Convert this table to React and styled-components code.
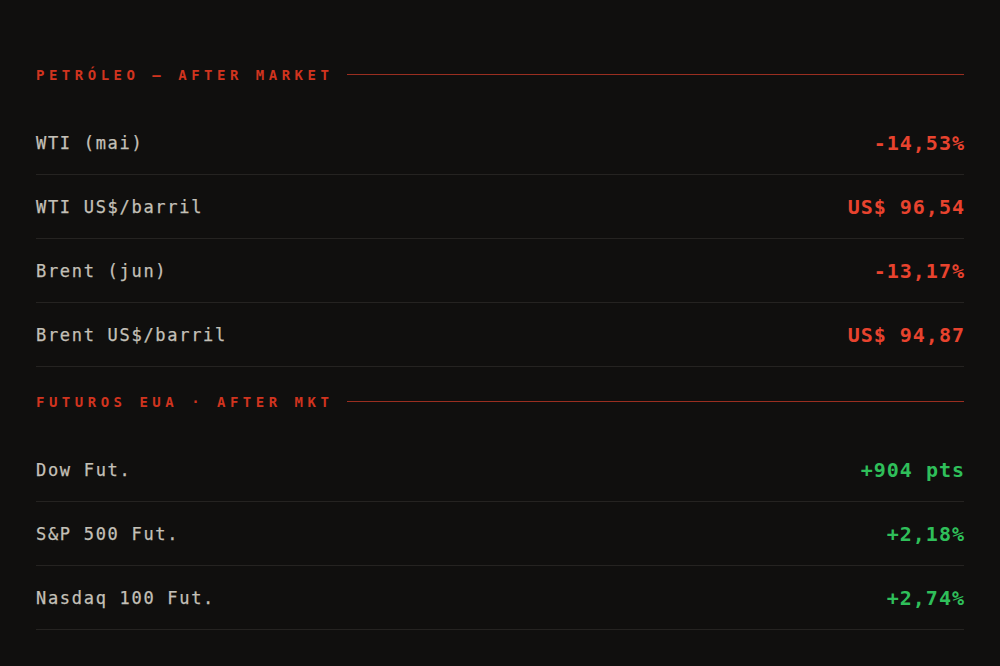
import React from 'react'
import styled, { createGlobalStyle } from 'styled-components'

const GlobalStyle = createGlobalStyle`
  html, body {
    margin: 0;
    padding: 0;
    background: #100f0e;
  }
  body {
    font-family: "DejaVu Sans Mono", "Liberation Mono", monospace;
  }
`

const Page = styled.div`
  min-height: 666px;
  box-sizing: border-box;
  padding: 66px 36px 0;
  background: #100f0e;
`

const Section = styled.section`
  & + & {
    margin-top: 26px;
  }
`

const SectionHeader = styled.div`
  display: flex;
  align-items: center;
  gap: 14px;
  height: 17px;
  margin-bottom: 28px;
`

const SectionTitle = styled.span`
  font-size: 14px;
  font-weight: 700;
  letter-spacing: 4.5px;
  color: #d1341f;
  white-space: nowrap;
`

const SectionRule = styled.span`
  flex: 1;
  border-top: 1px solid #9a2e20;
`

const Row = styled.div`
  display: flex;
  align-items: center;
  justify-content: space-between;
  height: 64px;
  box-sizing: border-box;
  border-bottom: 1px solid #252321;
`

const Label = styled.span`
  font-size: 17px;
  letter-spacing: 1.7px;
  color: #c4c0b8;
  -webkit-text-stroke: 0.25px #c4c0b8;
`

const Value = styled.span`
  font-size: 20px;
  font-weight: 700;
  letter-spacing: 1px;
  margin-right: -1px;
  color: ${p => (p.$up ? '#2fbf5a' : '#e8432e')};
`

const sections = [
  {
    title: 'PETRÓLEO — AFTER MARKET',
    rows: [
      ['WTI (mai)', '-14,53%'],
      ['WTI US$/barril', 'US$ 96,54'],
      ['Brent (jun)', '-13,17%'],
      ['Brent US$/barril', 'US$ 94,87'],
    ],
  },
  {
    title: 'FUTUROS EUA · AFTER MKT',
    up: true,
    rows: [
      ['Dow Fut.', '+904 pts'],
      ['S&P 500 Fut.', '+2,18%'],
      ['Nasdaq 100 Fut.', '+2,74%'],
    ],
  },
]

export default function App() {
  return (
    <>
      <GlobalStyle />
      <Page>
        {sections.map(s => (
          <Section key={s.title}>
            <SectionHeader>
              <SectionTitle>{s.title}</SectionTitle>
              <SectionRule />
            </SectionHeader>
            {s.rows.map(([label, value]) => (
              <Row key={label}>
                <Label>{label}</Label>
                <Value $up={s.up}>{value}</Value>
              </Row>
            ))}
          </Section>
        ))}
      </Page>
    </>
  )
}
